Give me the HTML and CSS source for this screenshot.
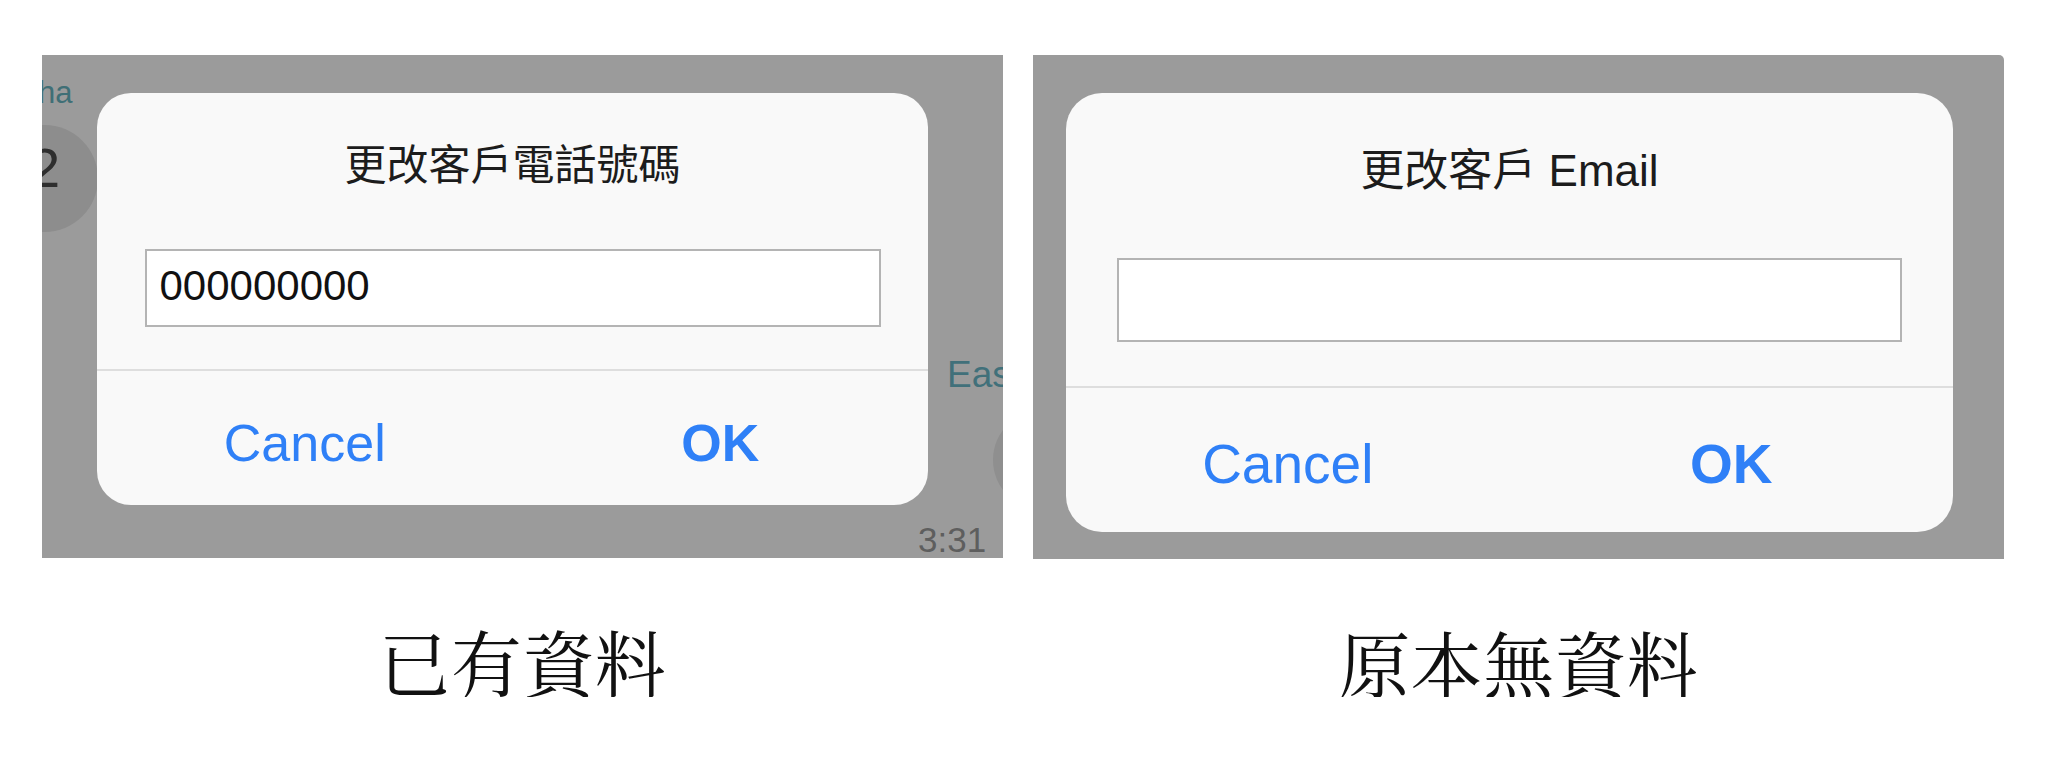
FILE: index.html
```html
<!DOCTYPE html>
<html lang="zh-Hant">
<head>
<meta charset="utf-8">
<title>Dialogs</title>
<link rel="stylesheet" href="styles.css">
</head>
<body>
<div class="page">
  <div class="col col-left">
    <div class="panel panel-left">
      <span class="bg-name">ha</span>
      <span class="bg-avatar"></span>
      <span class="bg-num">2</span>
      <span class="bg-eas">Eas</span>
      <span class="bg-avatar2"></span>
      <span class="bg-time">3:31</span>
      <div class="dialog dialog-left">
        <div class="title">更改客戶電話號碼</div>
        <div class="field"><span class="field-text">000000000</span></div>
        <div class="sep"></div>
        <div class="buttons">
          <span class="btn">Cancel</span>
          <span class="btn btn-ok">OK</span>
        </div>
      </div>
    </div>
    <div class="caption">已有資料</div>
  </div>
  <div class="col col-right">
    <div class="panel panel-right">
      <div class="dialog dialog-right">
        <div class="title">更改客戶 Email</div>
        <div class="field"></div>
        <div class="sep"></div>
        <div class="buttons">
          <span class="btn">Cancel</span>
          <span class="btn btn-ok">OK</span>
        </div>
      </div>
    </div>
    <div class="caption">原本無資料</div>
  </div>
</div>
</body>
</html>
```
FILE: styles.css
```css
html, body {
  margin: 0;
  padding: 0;
  background: #ffffff;
}

.page {
  display: flex;
  align-items: flex-start;
  gap: 30px;
  padding: 55px 0 0 42px;
}

.col {
  display: flex;
  flex-direction: column;
  align-items: center;
}

.panel {
  position: relative;
  overflow: hidden;
  background: #9b9b9b;
  box-sizing: border-box;
}

.panel-left {
  width: 961px;
  height: 503px;
  padding: 38px 0 0 55px;
}

.panel-right {
  width: 971px;
  height: 504px;
  padding: 38px 0 0 33px;
  border-radius: 0 5px 0 0;
}

/* background chat remnants under the left dialog */
.bg-name,
.bg-num,
.bg-eas,
.bg-time {
  position: absolute;
  font-family: "Liberation Sans", Arial, sans-serif;
  line-height: 1;
  white-space: nowrap;
}

.bg-name {
  left: -4px;
  top: 22px;
  font-size: 31px;
  color: #3f6f76;
}

.bg-avatar {
  position: absolute;
  left: -51px;
  top: 70px;
  width: 107px;
  height: 107px;
  border-radius: 50%;
  background: #8d8d8d;
}

.bg-num {
  left: -13px;
  top: 85px;
  font-size: 56px;
  color: #2e2e2e;
}

.bg-eas {
  left: 905px;
  top: 301px;
  font-size: 37px;
  color: #41707a;
}

.bg-avatar2 {
  position: absolute;
  left: 951px;
  top: 355px;
  width: 100px;
  height: 100px;
  border-radius: 50%;
  background: #8f8f8f;
}

.bg-time {
  left: 876px;
  top: 467px;
  font-size: 35px;
  color: #5e5e5e;
}

/* dialog */
.dialog {
  position: relative;
  z-index: 1;
  display: flex;
  flex-direction: column;
  align-items: center;
  background: #f9f9f9;
  box-sizing: border-box;
}

.dialog-left {
  width: 831px;
  height: 412px;
  border-radius: 34px;
  padding-top: 52px;
}

.dialog-right {
  width: 887px;
  height: 439px;
  border-radius: 36px;
  padding-top: 56px;
}

.title {
  font-family: "Liberation Sans", "Noto Sans CJK TC", sans-serif;
  color: #1c1c1c;
  white-space: nowrap;
}

.dialog-left .title {
  font-size: 42px;
  line-height: 42px;
}

.dialog-right .title {
  font-size: 44px;
  line-height: 44px;
}

.field {
  display: flex;
  align-items: center;
  box-sizing: border-box;
  background: #ffffff;
  border: 2px solid #b4b4b4;
}

.dialog-left .field {
  width: 736px;
  height: 78px;
  margin-top: 62px;
  padding-left: 13px;
}

.dialog-right .field {
  width: 785px;
  height: 84px;
  margin-top: 65px;
}

.field-text {
  font-family: "Liberation Sans", Arial, sans-serif;
  font-size: 42px;
  line-height: 1;
  color: #111111;
  margin-top: -4px;
}

.sep {
  align-self: stretch;
  height: 2px;
  background: #dedede;
}

.dialog-left .sep {
  margin-top: 42px;
}

.dialog-right .sep {
  margin-top: 44px;
}

.buttons {
  align-self: stretch;
  flex: 1;
  display: flex;
}

.btn {
  flex: 1;
  display: flex;
  align-items: center;
  justify-content: center;
  font-family: "Liberation Sans", Arial, sans-serif;
  color: #2f80f7;
  line-height: 1;
}

.dialog-left .btn {
  font-size: 52px;
  padding-top: 10px;
}

.dialog-right .btn {
  font-size: 55px;
  padding-top: 8px;
}

.btn-ok {
  font-weight: bold;
}

.caption {
  margin-top: 66px;
  font-family: "Noto Serif CJK TC", "Noto Serif CJK SC", "Noto Sans CJK TC", serif;
  font-size: 72px;
  line-height: 72px;
  color: #111111;
}
```
